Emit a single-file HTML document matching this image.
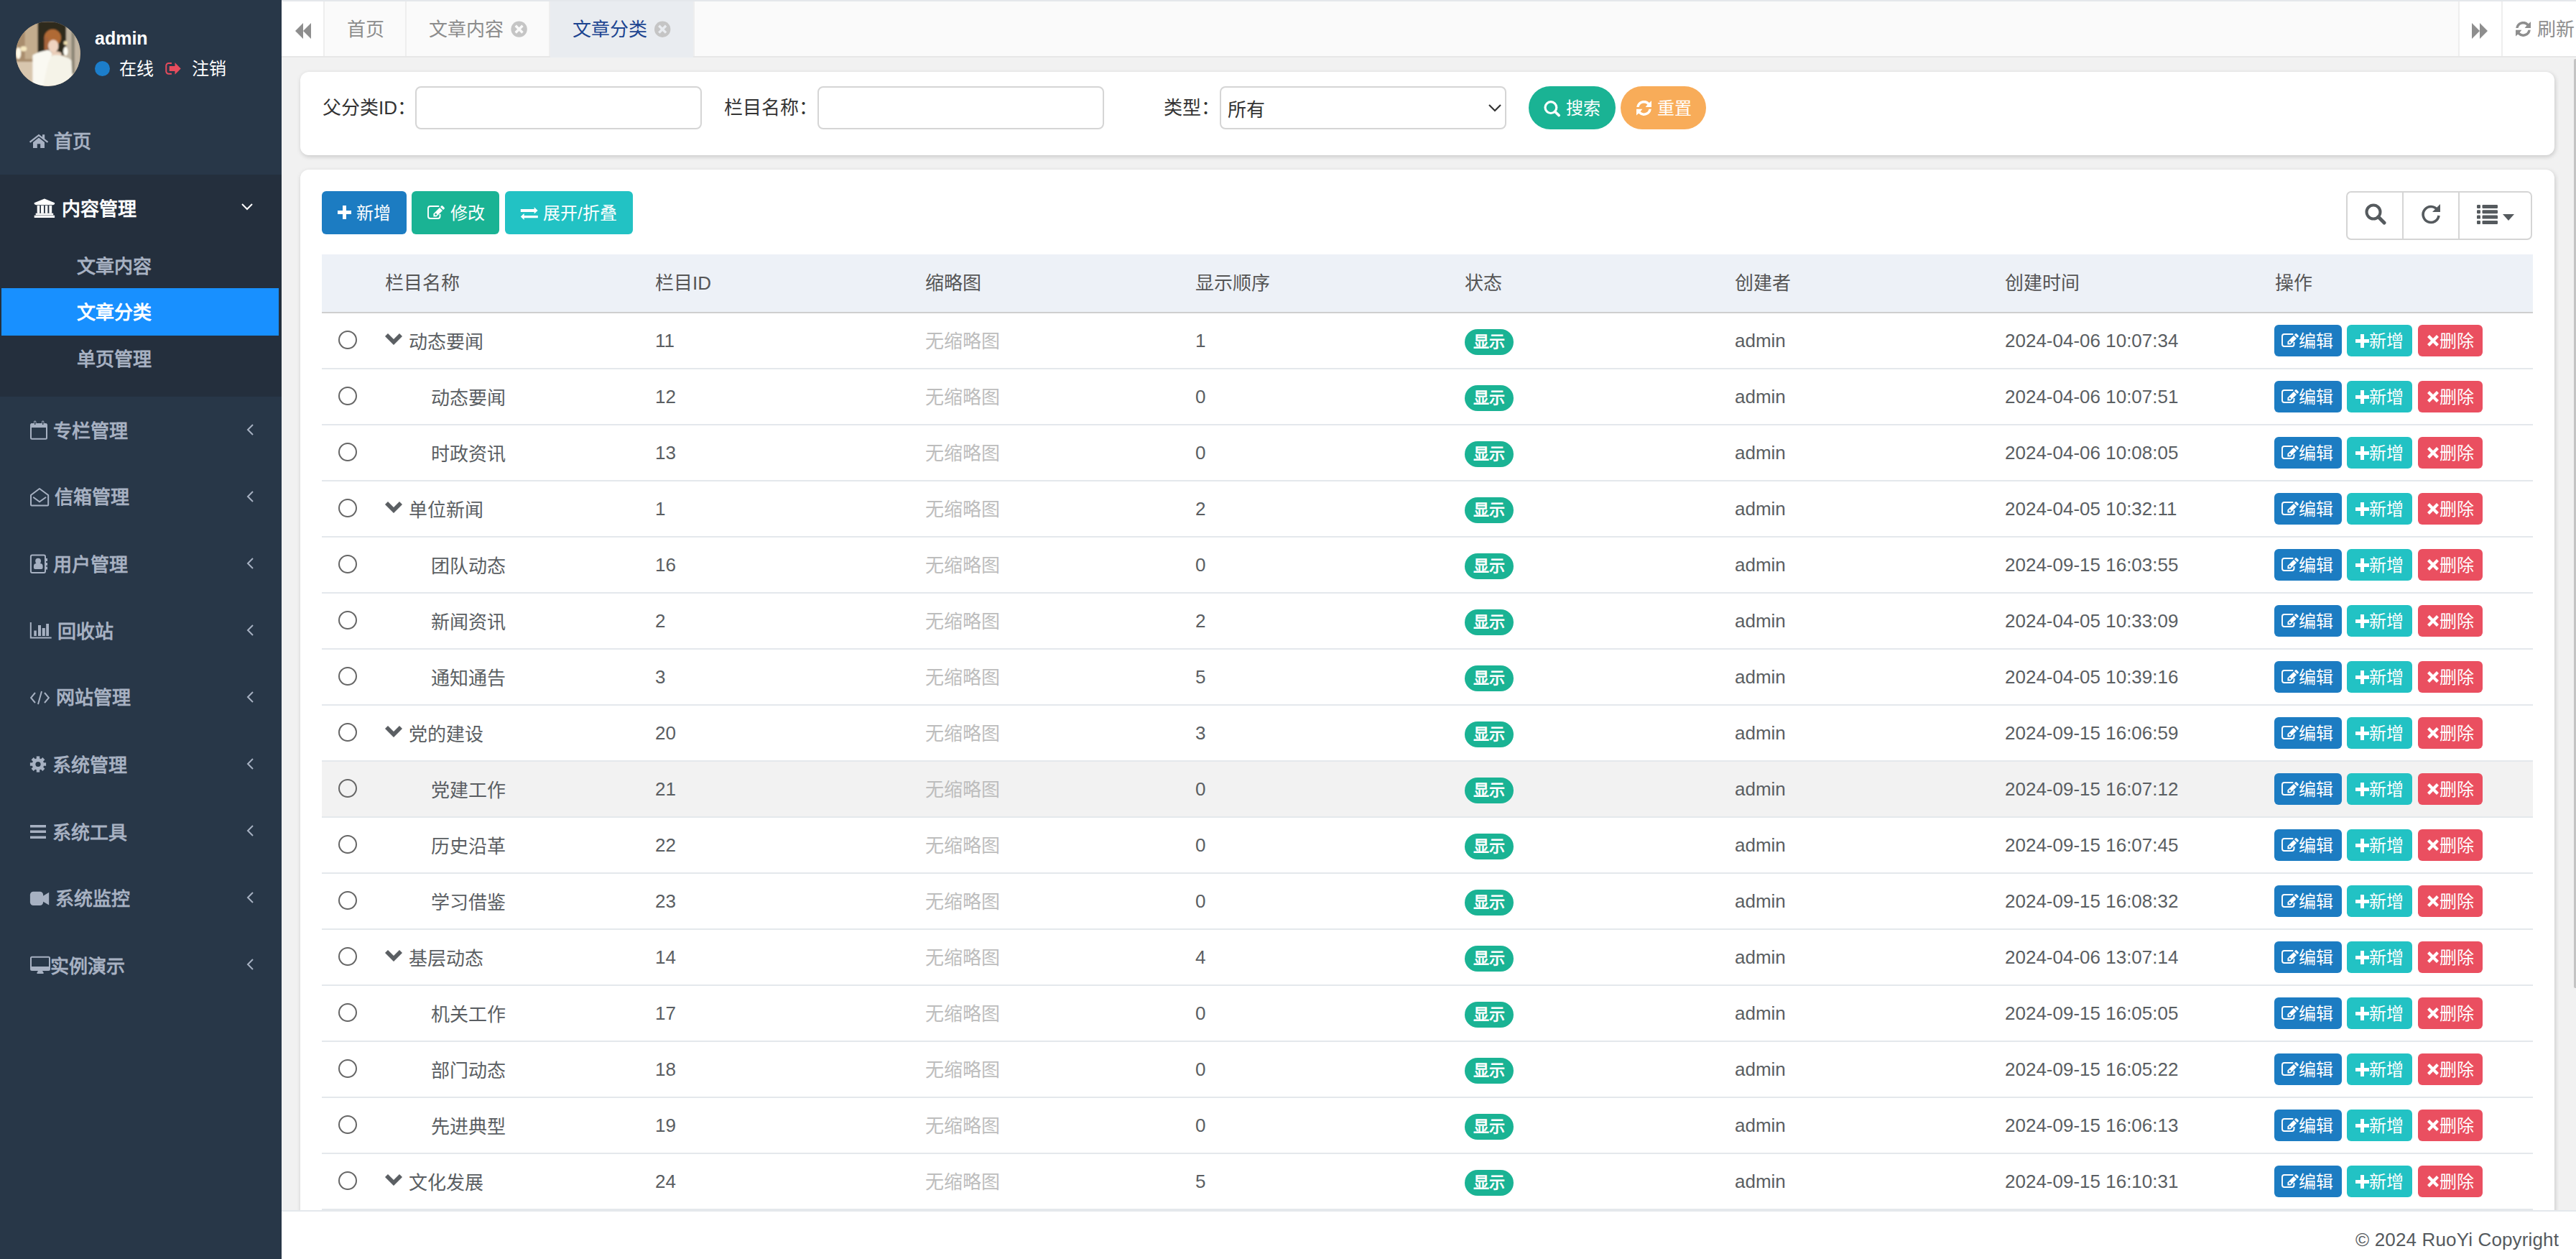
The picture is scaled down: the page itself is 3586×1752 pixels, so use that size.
<!DOCTYPE html>
<html lang="zh-CN">
<head>
<meta charset="utf-8">
<title>文章分类</title>
<style>
*{box-sizing:border-box;margin:0;padding:0}
html,body{width:3586px;height:1752px;overflow:hidden}
body{position:relative;background:#f1f1f1;font-family:"Liberation Sans",sans-serif;font-size:26px;color:#676a6c}
.abs{position:absolute}
svg{position:absolute;display:block}
/* sidebar */
#side{left:0;top:0;width:392px;height:1752px;background:#283748}
#sub{left:0;top:243px;width:392px;height:309px;background:#242f3d}
.mt{position:absolute;height:40px;line-height:40px;color:#a7b1c2;font-weight:bold;font-size:26px;white-space:nowrap}
/* tabs */
#tabs{left:392px;top:0;width:3194px;height:80px;background:#fafafa;border-top:2px solid #e4e7eb;border-bottom:2px solid #e7e7e7}
.tab{position:absolute;height:40px;line-height:40px;color:#8c8c8c;font-size:26px;white-space:nowrap}
/* panels */
.panel{position:absolute;background:#fff;border-radius:12px;box-shadow:1px 2px 6px rgba(0,0,0,.18)}
.lbl{position:absolute;height:40px;line-height:40px;color:#333;font-size:26px;white-space:nowrap}
.inp{position:absolute;border:2px solid #d5d5d5;border-radius:8px;background:#fff}
.btn{position:absolute;color:#fff;font-size:24px;white-space:nowrap}
.btn b{position:absolute;font-weight:500;line-height:40px;height:40px}
/* table */
#thead{left:448px;top:354px;width:3078px;height:82px;background:#edf1f7;border-bottom:2px solid #cfcfcf}
.th{position:absolute;top:20px;height:40px;line-height:40px;color:#555;font-size:26px;white-space:nowrap}
.row{position:absolute;left:448px;width:3078px;height:78px;border-bottom:2px solid #e4e8ec;background:#fff}
.row.hov{background:#f2f2f2}
.td{position:absolute;top:18px;height:40px;line-height:40px;color:#5a5e62;font-size:26px;white-space:nowrap}
.td.grey{color:#bdbdbd}
.td.grey.cj{top:19px}
.td.cj{top:20px}
.radio{position:absolute;left:23px;top:24px;width:26px;height:26px;border:2px solid #666;border-radius:50%}
.tchev{top:28px}
.badge{position:absolute;top:22px;height:36px;width:68px;border-radius:18px;background:#1ab394;color:#fff;font-size:22px;font-weight:bold;line-height:36px;text-align:center;white-space:nowrap}
.ob{position:absolute;top:16px;height:44px;border-radius:6px;color:#fff;font-size:24px;white-space:nowrap}
.ob b{position:absolute;right:12px;top:3px;line-height:40px;font-weight:500}
#footer{left:392px;top:1684px;width:3194px;height:68px;background:#fff;border-top:2px solid #e4e8ec}
@media (max-width:1800px){html{zoom:0.5}}

</style>
</head>
<body>
<!-- SIDEBAR -->
<div id="side" class="abs"></div>
<div id="sub" class="abs"></div>
<svg style="left:22px;top:30px" width="90" height="90" viewBox="0 0 100 100"><defs><clipPath id="avc"><circle cx="50" cy="50" r="50"/></clipPath><filter id="avb" x="-10%" y="-10%" width="120%" height="120%"><feGaussianBlur stdDeviation="1.3"/></filter></defs><g clip-path="url(#avc)"><rect width="100" height="100" fill="#b39a7c"/><g filter="url(#avb)"><rect x="0" y="62" width="100" height="40" fill="#d8c6ae"/><rect x="0" y="0" width="34" height="62" fill="#a98d6d"/><rect x="14" y="0" width="20" height="58" fill="#c4ad8e"/><rect x="34" y="0" width="44" height="52" fill="#2e291e"/><rect x="78" y="0" width="22" height="82" fill="#c1b5a2"/><rect x="86" y="14" width="5" height="66" fill="#8d8676"/><ellipse cx="4" cy="49" rx="4" ry="9" fill="#fffbea"/><ellipse cx="12" cy="42" rx="5" ry="4" fill="#f6e8c0"/><ellipse cx="77" cy="46" rx="3.5" ry="7" fill="#fffef5"/><ellipse cx="77" cy="33" rx="3" ry="3" fill="#f0e0b0"/><ellipse cx="57" cy="25" rx="13" ry="13" fill="#b06a36"/><rect x="44" y="24" width="6" height="20" fill="#a7653a"/><ellipse cx="58" cy="38" rx="8" ry="10" fill="#efd3c0"/><ellipse cx="62" cy="50" rx="9" ry="4" fill="#e9cdb8"/><path d="M58 52 Q74 50 86 60 L88 100 L40 100 L44 60 Z" fill="#f5f3e8"/><path d="M26 52 Q36 46 50 44 Q56 46 56 52 L50 64 L42 100 L26 100 Z" fill="#faf9f2"/></g></g></svg>
<div class="abs" style="left:132px;top:33px;height:40px;line-height:40px;color:#fff;font-weight:bold;font-size:25px">admin</div>
<div class="abs" style="left:132px;top:85px;width:21px;height:21px;border-radius:50%;background:#1c7ecb"></div>
<div class="abs" style="left:166px;top:76px;height:40px;line-height:40px;color:#fff;font-size:24px">在线</div>
<svg style="left:228px;top:84px" width="26" height="22" viewBox="228 84 26 22"><path d="M239 88 H234.8 a3.5 3.5 0 0 0 -3.5 3.5 V99.3 a3.5 3.5 0 0 0 3.5 3.5 H239" fill="none" stroke="#e84c5d" stroke-width="2"/><path d="M235.7 92 H243.5 V86.9 L251.7 95.4 L243.5 103.8 V99 H235.7 Z" fill="#e84c5d"/></svg>
<div class="abs" style="left:267px;top:76px;height:40px;line-height:40px;color:#fff;font-size:24px">注销</div>

<!-- menu -->
<svg style="left:40px;top:185px" width="28" height="23" viewBox="40 185 28 23"><path d="M42.5 197.2 L54 188.2 L65.6 197.2" fill="none" stroke="#a7b1c2" stroke-width="2.3" stroke-linecap="square"/><path d="M59 187.3 H62.2 V194.2 L59 191.6 Z" fill="#a7b1c2"/><path d="M46 198 L54 191.6 L62 198 V206 H56.2 V200.2 H51.8 V206 H46 Z" fill="#a7b1c2"/></svg>
<div class="mt" style="left:75px;top:177px">首页</div>

<svg style="left:46px;top:275px" width="32" height="30" viewBox="46 275 32 30"><path d="M61.9 276.5 L76.1 282.2 V284 L74 285.3 H50 L47.7 284 V282.2 Z" fill="#fff"/><path d="M51.7 286 H55.3 V296.8 H51.7 Z M57 286 H61 V296.8 H57 Z M62.8 286 H66.4 V296.8 H62.8 Z M68.4 286 H72.2 V296.8 H68.4 Z" fill="#fff"/><path d="M49.7 296.8 H74.2 V299.2 H49.7 Z M47.7 299.8 H76.1 V303 H47.7 Z" fill="#fff"/></svg>
<div class="mt" style="left:86px;top:271px;color:#fff">内容管理</div>
<svg style="left:336px;top:283px" width="16" height="10" viewBox="0 0 16 10"><path d="M1 1 L8 8 L15 1" fill="none" stroke="#fff" stroke-width="2"/></svg>

<div class="mt" style="left:107px;top:351px">文章内容</div>
<div class="abs" style="left:2px;top:401px;width:386px;height:66px;background:#1890ff"></div>
<div class="mt" style="left:107px;top:415px;color:#fff">文章分类</div>
<div class="mt" style="left:107px;top:480px">单页管理</div>

<svg style="left:40px;top:584px" width="30" height="30" viewBox="40 584 30 30"><rect x="43" y="590" width="22" height="20.7" rx="1.5" fill="none" stroke="#a7b1c2" stroke-width="2"/><rect x="43" y="589.5" width="22" height="5.5" fill="#a7b1c2"/><rect x="47" y="585.5" width="3.4" height="6.5" rx="1.5" fill="#a7b1c2"/><rect x="58" y="585.5" width="3.4" height="6.5" rx="1.5" fill="#a7b1c2"/><rect x="47.9" y="586.5" width="1.6" height="4.5" rx=".8" fill="#283748"/><rect x="58.9" y="586.5" width="1.6" height="4.5" rx=".8" fill="#283748"/></svg>
<div class="mt" style="left:74px;top:580px">专栏管理</div>

<svg style="left:40px;top:677px" width="30" height="30" viewBox="40 677 30 30"><path d="M43 689 L55 680 L67.2 689 V702.4 a1 1 0 0 1 -1 1 H44 a1 1 0 0 1 -1 -1 Z" fill="none" stroke="#a7b1c2" stroke-width="2" stroke-linejoin="round"/><path d="M46.8 692.3 L55 698.3 L63.5 692.3" fill="none" stroke="#a7b1c2" stroke-width="2" stroke-linecap="round"/></svg>
<div class="mt" style="left:76px;top:672px">信箱管理</div>

<svg style="left:40px;top:770px" width="28" height="30" viewBox="40 770 28 30"><rect x="42.9" y="772.6" width="20.1" height="24.3" rx="2" fill="none" stroke="#a7b1c2" stroke-width="2"/><circle cx="53.1" cy="780.7" r="3.9" fill="#a7b1c2"/><path d="M46.9 788 a4 4 0 0 1 4 -4 H55.6 a4 4 0 0 1 4 4 V790 a2 2 0 0 1 -2 2 H48.9 a2 2 0 0 1 -2 -2 Z" fill="#a7b1c2"/><path d="M63.5 777 H66 V781 H63.5 Z M63.5 783 H66 V787 H63.5 Z M63.5 788.5 H66 V792.5 H63.5 Z" fill="#a7b1c2"/></svg>
<div class="mt" style="left:74px;top:766px">用户管理</div>

<svg style="left:40px;top:864px" width="34" height="27" viewBox="40 864 34 27"><path d="M42.8 866 V887.5 H71.7" fill="none" stroke="#a7b1c2" stroke-width="2"/><path d="M47.3 877.5 H50.8 V885 H47.3 Z M53 870 H57 V885 H53 Z M58.7 874 H62.8 V885 H58.7 Z M64.2 868 H68 V885 H64.2 Z" fill="#a7b1c2"/></svg>
<div class="mt" style="left:80px;top:859px">回收站</div>

<svg style="left:42px;top:961px" width="27" height="20" viewBox="0 0 27 20"><path d="M7 3 L1 10 L7 17 M20 3 L26 10 L20 17 M16 1 L11 19" fill="none" stroke="#a7b1c2" stroke-width="2"/></svg>
<div class="mt" style="left:78px;top:951px">网站管理</div>

<svg style="left:40px;top:1050px" width="28" height="28" viewBox="-13 -13.5 28 28"><circle r="8.3" fill="#a7b1c2"/><rect x="-2.2" y="-11.1" width="4.4" height="6" transform="rotate(0)" fill="#a7b1c2"/><rect x="-2.2" y="-11.1" width="4.4" height="6" transform="rotate(45)" fill="#a7b1c2"/><rect x="-2.2" y="-11.1" width="4.4" height="6" transform="rotate(90)" fill="#a7b1c2"/><rect x="-2.2" y="-11.1" width="4.4" height="6" transform="rotate(135)" fill="#a7b1c2"/><rect x="-2.2" y="-11.1" width="4.4" height="6" transform="rotate(180)" fill="#a7b1c2"/><rect x="-2.2" y="-11.1" width="4.4" height="6" transform="rotate(225)" fill="#a7b1c2"/><rect x="-2.2" y="-11.1" width="4.4" height="6" transform="rotate(270)" fill="#a7b1c2"/><rect x="-2.2" y="-11.1" width="4.4" height="6" transform="rotate(315)" fill="#a7b1c2"/><circle r="3.6" fill="#283748"/></svg>
<div class="mt" style="left:73px;top:1045px">系统管理</div>

<svg style="left:42px;top:1148px" width="22" height="19" viewBox="0 0 22 19"><path d="M0 0 H22 V3.5 H0 Z M0 7.5 H22 V11 H0 Z M0 15.5 H22 V19 H0 Z" fill="#a7b1c2"/></svg>
<div class="mt" style="left:73px;top:1139px">系统工具</div>

<svg style="left:40px;top:1238px" width="30" height="24" viewBox="40 1238 30 24"><rect x="41.9" y="1240.7" width="18.2" height="19.3" rx="4.5" fill="#a7b1c2"/><path d="M58 1248 L68.2 1241.8 V1259.5 L58 1253.5 Z" fill="#a7b1c2"/></svg>
<div class="mt" style="left:77px;top:1231px">系统监控</div>

<svg style="left:40px;top:1328px" width="32" height="30" viewBox="40 1328 32 30"><path d="M44.5 1330.7 H67.5 a2.5 2.5 0 0 1 2.5 2.5 V1348.5 a2.5 2.5 0 0 1 -2.5 2.5 H44.5 a2.5 2.5 0 0 1 -2.5 -2.5 V1333.2 a2.5 2.5 0 0 1 2.5 -2.5 Z M44 1332.7 V1345 H68 V1332.7 Z" fill="#a7b1c2" fill-rule="evenodd"/><path d="M53 1351 H59 L60.6 1353.5 V1355 H51.5 V1353.5 Z" fill="#a7b1c2"/></svg>
<div class="mt" style="left:70px;top:1325px">实例演示</div>

<svg style="left:343px;top:590px" width="10" height="16" viewBox="0 0 10 16"><path d="M9 1 L2 8 L9 15" fill="none" stroke="#a7b1c2" stroke-width="2"/></svg>
<svg style="left:343px;top:683px" width="10" height="16" viewBox="0 0 10 16"><path d="M9 1 L2 8 L9 15" fill="none" stroke="#a7b1c2" stroke-width="2"/></svg>
<svg style="left:343px;top:776px" width="10" height="16" viewBox="0 0 10 16"><path d="M9 1 L2 8 L9 15" fill="none" stroke="#a7b1c2" stroke-width="2"/></svg>
<svg style="left:343px;top:869px" width="10" height="16" viewBox="0 0 10 16"><path d="M9 1 L2 8 L9 15" fill="none" stroke="#a7b1c2" stroke-width="2"/></svg>
<svg style="left:343px;top:962px" width="10" height="16" viewBox="0 0 10 16"><path d="M9 1 L2 8 L9 15" fill="none" stroke="#a7b1c2" stroke-width="2"/></svg>
<svg style="left:343px;top:1055px" width="10" height="16" viewBox="0 0 10 16"><path d="M9 1 L2 8 L9 15" fill="none" stroke="#a7b1c2" stroke-width="2"/></svg>
<svg style="left:343px;top:1148px" width="10" height="16" viewBox="0 0 10 16"><path d="M9 1 L2 8 L9 15" fill="none" stroke="#a7b1c2" stroke-width="2"/></svg>
<svg style="left:343px;top:1241px" width="10" height="16" viewBox="0 0 10 16"><path d="M9 1 L2 8 L9 15" fill="none" stroke="#a7b1c2" stroke-width="2"/></svg>
<svg style="left:343px;top:1334px" width="10" height="16" viewBox="0 0 10 16"><path d="M9 1 L2 8 L9 15" fill="none" stroke="#a7b1c2" stroke-width="2"/></svg>

<!-- TABS -->
<div id="tabs" class="abs"></div>
<div class="abs" style="left:392px;top:2px;width:58px;height:76px;background:#fff"></div>
<div class="abs" style="left:450px;top:2px;width:2px;height:76px;background:#eee"></div>
<svg style="left:411px;top:32px" width="22" height="22" viewBox="0 0 22 22"><path d="M11 0 V22 L0 11 Z M22 0 V22 L11 11 Z" fill="#8e8e8e"/></svg>
<div class="tab" style="left:483px;top:21px">首页</div>
<div class="abs" style="left:564px;top:2px;width:2px;height:76px;background:#eee"></div>
<div class="tab" style="left:597px;top:21px">文章内容</div>
<svg style="left:705px;top:25px" width="35" height="32" viewBox="705 25 35 32"><circle cx="722.6" cy="40.6" r="11.2" fill="#c5c5c5"/><path d="M717.7 35.7 L727.5 45.5 M727.5 35.7 L717.7 45.5" stroke="#fafafa" stroke-width="3.4"/></svg>
<div class="abs" style="left:764px;top:2px;width:2px;height:76px;background:#eee"></div>
<div class="abs" style="left:766px;top:2px;width:199px;height:78px;background:#e9ecf0"></div>
<div class="tab" style="left:797px;top:21px;color:#1d4590">文章分类</div>
<svg style="left:905px;top:25px" width="35" height="32" viewBox="905 25 35 32"><circle cx="922.2" cy="40.7" r="11.2" fill="#c5c5c5"/><path d="M917.3 35.8 L927.1 45.6 M927.1 35.8 L917.3 45.6" stroke="#e9ecf0" stroke-width="3.4"/></svg>
<div class="abs" style="left:965px;top:2px;width:2px;height:76px;background:#eee"></div>
<div class="abs" style="left:3422px;top:2px;width:2px;height:76px;background:#eee"></div>
<div class="abs" style="left:3424px;top:2px;width:58px;height:76px;background:#fff"></div>
<svg style="left:3441px;top:32px" width="22" height="22" viewBox="0 0 22 22"><path d="M0 0 V22 L11 11 Z M11 0 V22 L22 11 Z" fill="#8e8e8e"/></svg>
<div class="abs" style="left:3482px;top:2px;width:2px;height:76px;background:#eee"></div>
<div class="abs" style="left:3484px;top:2px;width:102px;height:76px;background:#fff"></div>
<svg style="left:3502px;top:30px" width="21" height="21" viewBox="0 0 21 21"><path d="M0.2 9.1 A10.4 10.4 0 0 1 17.9 3.0 L21 0.3 V9.1 H12.6 L15.4 5.5 A7 7 0 0 0 3.6 9.1 Z" fill="#8e8e8e"/><path d="M0.2 9.1 A10.4 10.4 0 0 1 17.9 3.0 L21 0.3 V9.1 H12.6 L15.4 5.5 A7 7 0 0 0 3.6 9.1 Z" fill="#8e8e8e" transform="rotate(180 10.5 10.4)"/></svg>
<div class="tab" style="left:3532px;top:21px;color:#8e8e8e">刷新</div>

<!-- SEARCH PANEL -->
<div class="panel" style="left:418px;top:100px;width:3138px;height:116px"></div>
<div class="lbl" style="left:449px;top:130px">父分类ID：</div>
<div class="inp" style="left:578px;top:120px;width:399px;height:60px"></div>
<div class="lbl" style="left:1008px;top:130px">栏目名称：</div>
<div class="inp" style="left:1138px;top:120px;width:399px;height:60px"></div>
<div class="lbl" style="left:1620px;top:130px">类型：</div>
<div class="inp" style="left:1698px;top:120px;width:399px;height:60px"></div>
<div class="lbl" style="left:1709px;top:133px">所有</div>
<svg style="left:2072px;top:145px" width="18" height="11" viewBox="0 0 18 11"><path d="M1 1 L9 9 L17 1" fill="none" stroke="#333" stroke-width="2.2"/></svg>
<div class="btn" style="left:2128px;top:120px;width:121px;height:60px;border-radius:30px;background:#1ab394"><svg style="left:21px;top:19px" width="24" height="24" viewBox="0 0 24 24"><circle cx="9.9" cy="10.6" r="7.9" fill="none" stroke="#fff" stroke-width="3.2"/><path d="M15.6 16.3 L21.2 21.6" stroke="#fff" stroke-width="3.6" stroke-linecap="round"/></svg><b style="left:52px;top:11px">搜索</b></div>
<div class="btn" style="left:2256px;top:120px;width:119px;height:60px;border-radius:30px;background:#f8ac59"><svg style="left:22px;top:20px" width="21" height="21" viewBox="0 0 21 21"><path d="M0.2 9.1 A10.4 10.4 0 0 1 17.9 3.0 L21 0.3 V9.1 H12.6 L15.4 5.5 A7 7 0 0 0 3.6 9.1 Z" fill="#fff"/><path d="M0.2 9.1 A10.4 10.4 0 0 1 17.9 3.0 L21 0.3 V9.1 H12.6 L15.4 5.5 A7 7 0 0 0 3.6 9.1 Z" fill="#fff" transform="rotate(180 10.5 10.4)"/></svg><b style="left:51px;top:11px">重置</b></div>

<!-- TABLE PANEL -->
<div class="panel" style="left:418px;top:236px;width:3138px;height:1600px"></div>
<div class="btn" style="left:448px;top:266px;width:118px;height:60px;border-radius:6px;background:#1c7cc2"><svg style="left:22px;top:20px" width="19" height="19" viewBox="0 0 19 19"><path d="M7 0 H12 V7 H19 V12 H12 V19 H7 V12 H0 V7 H7 Z" fill="#fff"/></svg><b style="left:48px;top:11px">新增</b></div>
<div class="btn" style="left:573px;top:266px;width:122px;height:60px;border-radius:6px;background:#1ab394"><svg style="left:22px;top:20px" width="25" height="21" viewBox="595 286 25 21"><path d="M611.3 287 H599 a3 3 0 0 0 -3 3 V301 a3 3 0 0 0 3 3 H609.5 a3 3 0 0 0 3 -3 V298" fill="none" stroke="#fff" stroke-width="1.9"/><g transform="translate(603.4 301.6) rotate(-45)"><path d="M0 0 L3 -2.9 H15 V2.9 H3 Z" fill="#fff"/><rect x="3.4" y="-1.3" width="2.6" height="2.6" fill="#1ab394"/><path d="M16.4 -2.9 H18.4 a1.3 1.3 0 0 1 1.3 1.3 V1.6 a1.3 1.3 0 0 1 -1.3 1.3 H16.4 Z" fill="#fff"/></g></svg><b style="left:54px;top:11px">修改</b></div>
<div class="btn" style="left:703px;top:266px;width:178px;height:60px;border-radius:6px;background:#22c2c4"><svg style="left:21px;top:22px" width="26" height="19" viewBox="724 288 26 19"><path d="M724.8 291.1 H743.7 V288.3 L748.6 293 L743.7 297.5 V294.9 H724.8 Z" fill="#fff"/><path d="M748.8 299.9 H729.6 V296.9 L724.8 301.6 L729.6 306.1 V303.3 H748.8 Z" fill="#fff"/></svg><b style="left:53px;top:11px">展开/折叠</b></div>

<div class="abs" style="left:3266px;top:266px;width:259px;height:68px;border:2px solid #d5d5d5;border-radius:7px;background:#fff"></div>
<div class="abs" style="left:3344px;top:268px;width:2px;height:64px;background:#d5d5d5"></div>
<div class="abs" style="left:3422px;top:268px;width:2px;height:64px;background:#d5d5d5"></div>
<svg style="left:3292px;top:283px" width="30" height="30" viewBox="0 0 30 30"><circle cx="12" cy="12" r="9.5" fill="none" stroke="#555a5e" stroke-width="4"/><path d="M19 19 L27 27" stroke="#555a5e" stroke-width="5" stroke-linecap="round"/></svg>
<svg style="left:3370px;top:283px" width="29" height="30" viewBox="0 0 29 30"><path d="M23 9 A11 11 0 1 0 25 17" fill="none" stroke="#555a5e" stroke-width="3.6"/><path d="M27 1 V12 H16 Z" fill="#555a5e"/></svg>
<svg style="left:3448px;top:285px" width="29" height="27" viewBox="0 0 29 27"><rect x="0" y="0" width="5" height="5" rx="1.2" fill="#555a5e"/><rect x="0" y="7.3" width="5" height="5" rx="1.2" fill="#555a5e"/><rect x="0" y="14.6" width="5" height="5" rx="1.2" fill="#555a5e"/><rect x="0" y="21.9" width="5" height="5" rx="1.2" fill="#555a5e"/><rect x="7.5" y="0" width="21.5" height="5" rx="1.2" fill="#555a5e"/><rect x="7.5" y="7.3" width="21.5" height="5" rx="1.2" fill="#555a5e"/><rect x="7.5" y="14.6" width="21.5" height="5" rx="1.2" fill="#555a5e"/><rect x="7.5" y="21.9" width="21.5" height="5" rx="1.2" fill="#555a5e"/></svg>
<svg style="left:3484px;top:298px" width="16" height="9" viewBox="0 0 16 9"><path d="M0 0 H16 L8 9 Z" fill="#555a5e"/></svg>

<div id="thead" class="abs">
<span class="th" style="left:88px">栏目名称</span>
<span class="th" style="left:464px">栏目ID</span>
<span class="th" style="left:840px">缩略图</span>
<span class="th" style="left:1216px">显示顺序</span>
<span class="th" style="left:1591px">状态</span>
<span class="th" style="left:1967px">创建者</span>
<span class="th" style="left:2343px">创建时间</span>
<span class="th" style="left:2719px">操作</span>
</div>
<div class="row" style="top:436px"><i class="radio"></i><svg class="tchev" style="left:88px" width="24" height="16" viewBox="0 0 24 16"><path d="M0 4 L4 0 L12 8 L20 0 L24 4 L12 16 Z" fill="#5b5f63"/></svg><span class="td cj" style="left:121px">动态要闻</span><span class="td num" style="left:464px">11</span><span class="td grey cj" style="left:840px">无缩略图</span><span class="td num" style="left:1216px">1</span><span class="badge" style="left:1591px">显示</span><span class="td num" style="left:1967px">admin</span><span class="td num" style="left:2343px">2024-04-06 10:07:34</span><span class="ob" style="left:2718px;width:94px;background:#1c7cc2"><svg class="oi" style="left:10px;top:12px" width="25" height="21" viewBox="595 286 25 21"><path d="M611.3 287 H599 a3 3 0 0 0 -3 3 V301 a3 3 0 0 0 3 3 H609.5 a3 3 0 0 0 3 -3 V298" fill="none" stroke="#fff" stroke-width="1.9"/><g transform="translate(603.4 301.6) rotate(-45)"><path d="M0 0 L3 -2.9 H15 V2.9 H3 Z" fill="#fff"/><rect x="3.4" y="-1.3" width="2.6" height="2.6" fill="#1c7cc2"/><path d="M16.4 -2.9 H18.4 a1.3 1.3 0 0 1 1.3 1.3 V1.6 a1.3 1.3 0 0 1 -1.3 1.3 H16.4 Z" fill="#fff"/></g></svg><b>编辑</b></span><span class="ob" style="left:2819px;width:91px;background:#22c2c4"><svg class="oi" style="left:12px;top:13px" width="19" height="19" viewBox="0 0 19 19"><path d="M7 0 H12 V7 H19 V12 H12 V19 H7 V12 H0 V7 H7 Z" fill="#fff"/></svg><b>新增</b></span><span class="ob" style="left:2918px;width:90px;background:#ea4f60"><svg class="oi" style="left:13px;top:14px" width="16" height="16" viewBox="0 0 16 16"><path d="M0 3 L3 0 L8 5 L13 0 L16 3 L11 8 L16 13 L13 16 L8 11 L3 16 L0 13 L5 8 Z" fill="#fff"/></svg><b>删除</b></span></div>
<div class="row" style="top:514px"><i class="radio"></i><span class="td cj" style="left:152px">动态要闻</span><span class="td num" style="left:464px">12</span><span class="td grey cj" style="left:840px">无缩略图</span><span class="td num" style="left:1216px">0</span><span class="badge" style="left:1591px">显示</span><span class="td num" style="left:1967px">admin</span><span class="td num" style="left:2343px">2024-04-06 10:07:51</span><span class="ob" style="left:2718px;width:94px;background:#1c7cc2"><svg class="oi" style="left:10px;top:12px" width="25" height="21" viewBox="595 286 25 21"><path d="M611.3 287 H599 a3 3 0 0 0 -3 3 V301 a3 3 0 0 0 3 3 H609.5 a3 3 0 0 0 3 -3 V298" fill="none" stroke="#fff" stroke-width="1.9"/><g transform="translate(603.4 301.6) rotate(-45)"><path d="M0 0 L3 -2.9 H15 V2.9 H3 Z" fill="#fff"/><rect x="3.4" y="-1.3" width="2.6" height="2.6" fill="#1c7cc2"/><path d="M16.4 -2.9 H18.4 a1.3 1.3 0 0 1 1.3 1.3 V1.6 a1.3 1.3 0 0 1 -1.3 1.3 H16.4 Z" fill="#fff"/></g></svg><b>编辑</b></span><span class="ob" style="left:2819px;width:91px;background:#22c2c4"><svg class="oi" style="left:12px;top:13px" width="19" height="19" viewBox="0 0 19 19"><path d="M7 0 H12 V7 H19 V12 H12 V19 H7 V12 H0 V7 H7 Z" fill="#fff"/></svg><b>新增</b></span><span class="ob" style="left:2918px;width:90px;background:#ea4f60"><svg class="oi" style="left:13px;top:14px" width="16" height="16" viewBox="0 0 16 16"><path d="M0 3 L3 0 L8 5 L13 0 L16 3 L11 8 L16 13 L13 16 L8 11 L3 16 L0 13 L5 8 Z" fill="#fff"/></svg><b>删除</b></span></div>
<div class="row" style="top:592px"><i class="radio"></i><span class="td cj" style="left:152px">时政资讯</span><span class="td num" style="left:464px">13</span><span class="td grey cj" style="left:840px">无缩略图</span><span class="td num" style="left:1216px">0</span><span class="badge" style="left:1591px">显示</span><span class="td num" style="left:1967px">admin</span><span class="td num" style="left:2343px">2024-04-06 10:08:05</span><span class="ob" style="left:2718px;width:94px;background:#1c7cc2"><svg class="oi" style="left:10px;top:12px" width="25" height="21" viewBox="595 286 25 21"><path d="M611.3 287 H599 a3 3 0 0 0 -3 3 V301 a3 3 0 0 0 3 3 H609.5 a3 3 0 0 0 3 -3 V298" fill="none" stroke="#fff" stroke-width="1.9"/><g transform="translate(603.4 301.6) rotate(-45)"><path d="M0 0 L3 -2.9 H15 V2.9 H3 Z" fill="#fff"/><rect x="3.4" y="-1.3" width="2.6" height="2.6" fill="#1c7cc2"/><path d="M16.4 -2.9 H18.4 a1.3 1.3 0 0 1 1.3 1.3 V1.6 a1.3 1.3 0 0 1 -1.3 1.3 H16.4 Z" fill="#fff"/></g></svg><b>编辑</b></span><span class="ob" style="left:2819px;width:91px;background:#22c2c4"><svg class="oi" style="left:12px;top:13px" width="19" height="19" viewBox="0 0 19 19"><path d="M7 0 H12 V7 H19 V12 H12 V19 H7 V12 H0 V7 H7 Z" fill="#fff"/></svg><b>新增</b></span><span class="ob" style="left:2918px;width:90px;background:#ea4f60"><svg class="oi" style="left:13px;top:14px" width="16" height="16" viewBox="0 0 16 16"><path d="M0 3 L3 0 L8 5 L13 0 L16 3 L11 8 L16 13 L13 16 L8 11 L3 16 L0 13 L5 8 Z" fill="#fff"/></svg><b>删除</b></span></div>
<div class="row" style="top:670px"><i class="radio"></i><svg class="tchev" style="left:88px" width="24" height="16" viewBox="0 0 24 16"><path d="M0 4 L4 0 L12 8 L20 0 L24 4 L12 16 Z" fill="#5b5f63"/></svg><span class="td cj" style="left:121px">单位新闻</span><span class="td num" style="left:464px">1</span><span class="td grey cj" style="left:840px">无缩略图</span><span class="td num" style="left:1216px">2</span><span class="badge" style="left:1591px">显示</span><span class="td num" style="left:1967px">admin</span><span class="td num" style="left:2343px">2024-04-05 10:32:11</span><span class="ob" style="left:2718px;width:94px;background:#1c7cc2"><svg class="oi" style="left:10px;top:12px" width="25" height="21" viewBox="595 286 25 21"><path d="M611.3 287 H599 a3 3 0 0 0 -3 3 V301 a3 3 0 0 0 3 3 H609.5 a3 3 0 0 0 3 -3 V298" fill="none" stroke="#fff" stroke-width="1.9"/><g transform="translate(603.4 301.6) rotate(-45)"><path d="M0 0 L3 -2.9 H15 V2.9 H3 Z" fill="#fff"/><rect x="3.4" y="-1.3" width="2.6" height="2.6" fill="#1c7cc2"/><path d="M16.4 -2.9 H18.4 a1.3 1.3 0 0 1 1.3 1.3 V1.6 a1.3 1.3 0 0 1 -1.3 1.3 H16.4 Z" fill="#fff"/></g></svg><b>编辑</b></span><span class="ob" style="left:2819px;width:91px;background:#22c2c4"><svg class="oi" style="left:12px;top:13px" width="19" height="19" viewBox="0 0 19 19"><path d="M7 0 H12 V7 H19 V12 H12 V19 H7 V12 H0 V7 H7 Z" fill="#fff"/></svg><b>新增</b></span><span class="ob" style="left:2918px;width:90px;background:#ea4f60"><svg class="oi" style="left:13px;top:14px" width="16" height="16" viewBox="0 0 16 16"><path d="M0 3 L3 0 L8 5 L13 0 L16 3 L11 8 L16 13 L13 16 L8 11 L3 16 L0 13 L5 8 Z" fill="#fff"/></svg><b>删除</b></span></div>
<div class="row" style="top:748px"><i class="radio"></i><span class="td cj" style="left:152px">团队动态</span><span class="td num" style="left:464px">16</span><span class="td grey cj" style="left:840px">无缩略图</span><span class="td num" style="left:1216px">0</span><span class="badge" style="left:1591px">显示</span><span class="td num" style="left:1967px">admin</span><span class="td num" style="left:2343px">2024-09-15 16:03:55</span><span class="ob" style="left:2718px;width:94px;background:#1c7cc2"><svg class="oi" style="left:10px;top:12px" width="25" height="21" viewBox="595 286 25 21"><path d="M611.3 287 H599 a3 3 0 0 0 -3 3 V301 a3 3 0 0 0 3 3 H609.5 a3 3 0 0 0 3 -3 V298" fill="none" stroke="#fff" stroke-width="1.9"/><g transform="translate(603.4 301.6) rotate(-45)"><path d="M0 0 L3 -2.9 H15 V2.9 H3 Z" fill="#fff"/><rect x="3.4" y="-1.3" width="2.6" height="2.6" fill="#1c7cc2"/><path d="M16.4 -2.9 H18.4 a1.3 1.3 0 0 1 1.3 1.3 V1.6 a1.3 1.3 0 0 1 -1.3 1.3 H16.4 Z" fill="#fff"/></g></svg><b>编辑</b></span><span class="ob" style="left:2819px;width:91px;background:#22c2c4"><svg class="oi" style="left:12px;top:13px" width="19" height="19" viewBox="0 0 19 19"><path d="M7 0 H12 V7 H19 V12 H12 V19 H7 V12 H0 V7 H7 Z" fill="#fff"/></svg><b>新增</b></span><span class="ob" style="left:2918px;width:90px;background:#ea4f60"><svg class="oi" style="left:13px;top:14px" width="16" height="16" viewBox="0 0 16 16"><path d="M0 3 L3 0 L8 5 L13 0 L16 3 L11 8 L16 13 L13 16 L8 11 L3 16 L0 13 L5 8 Z" fill="#fff"/></svg><b>删除</b></span></div>
<div class="row" style="top:826px"><i class="radio"></i><span class="td cj" style="left:152px">新闻资讯</span><span class="td num" style="left:464px">2</span><span class="td grey cj" style="left:840px">无缩略图</span><span class="td num" style="left:1216px">2</span><span class="badge" style="left:1591px">显示</span><span class="td num" style="left:1967px">admin</span><span class="td num" style="left:2343px">2024-04-05 10:33:09</span><span class="ob" style="left:2718px;width:94px;background:#1c7cc2"><svg class="oi" style="left:10px;top:12px" width="25" height="21" viewBox="595 286 25 21"><path d="M611.3 287 H599 a3 3 0 0 0 -3 3 V301 a3 3 0 0 0 3 3 H609.5 a3 3 0 0 0 3 -3 V298" fill="none" stroke="#fff" stroke-width="1.9"/><g transform="translate(603.4 301.6) rotate(-45)"><path d="M0 0 L3 -2.9 H15 V2.9 H3 Z" fill="#fff"/><rect x="3.4" y="-1.3" width="2.6" height="2.6" fill="#1c7cc2"/><path d="M16.4 -2.9 H18.4 a1.3 1.3 0 0 1 1.3 1.3 V1.6 a1.3 1.3 0 0 1 -1.3 1.3 H16.4 Z" fill="#fff"/></g></svg><b>编辑</b></span><span class="ob" style="left:2819px;width:91px;background:#22c2c4"><svg class="oi" style="left:12px;top:13px" width="19" height="19" viewBox="0 0 19 19"><path d="M7 0 H12 V7 H19 V12 H12 V19 H7 V12 H0 V7 H7 Z" fill="#fff"/></svg><b>新增</b></span><span class="ob" style="left:2918px;width:90px;background:#ea4f60"><svg class="oi" style="left:13px;top:14px" width="16" height="16" viewBox="0 0 16 16"><path d="M0 3 L3 0 L8 5 L13 0 L16 3 L11 8 L16 13 L13 16 L8 11 L3 16 L0 13 L5 8 Z" fill="#fff"/></svg><b>删除</b></span></div>
<div class="row" style="top:904px"><i class="radio"></i><span class="td cj" style="left:152px">通知通告</span><span class="td num" style="left:464px">3</span><span class="td grey cj" style="left:840px">无缩略图</span><span class="td num" style="left:1216px">5</span><span class="badge" style="left:1591px">显示</span><span class="td num" style="left:1967px">admin</span><span class="td num" style="left:2343px">2024-04-05 10:39:16</span><span class="ob" style="left:2718px;width:94px;background:#1c7cc2"><svg class="oi" style="left:10px;top:12px" width="25" height="21" viewBox="595 286 25 21"><path d="M611.3 287 H599 a3 3 0 0 0 -3 3 V301 a3 3 0 0 0 3 3 H609.5 a3 3 0 0 0 3 -3 V298" fill="none" stroke="#fff" stroke-width="1.9"/><g transform="translate(603.4 301.6) rotate(-45)"><path d="M0 0 L3 -2.9 H15 V2.9 H3 Z" fill="#fff"/><rect x="3.4" y="-1.3" width="2.6" height="2.6" fill="#1c7cc2"/><path d="M16.4 -2.9 H18.4 a1.3 1.3 0 0 1 1.3 1.3 V1.6 a1.3 1.3 0 0 1 -1.3 1.3 H16.4 Z" fill="#fff"/></g></svg><b>编辑</b></span><span class="ob" style="left:2819px;width:91px;background:#22c2c4"><svg class="oi" style="left:12px;top:13px" width="19" height="19" viewBox="0 0 19 19"><path d="M7 0 H12 V7 H19 V12 H12 V19 H7 V12 H0 V7 H7 Z" fill="#fff"/></svg><b>新增</b></span><span class="ob" style="left:2918px;width:90px;background:#ea4f60"><svg class="oi" style="left:13px;top:14px" width="16" height="16" viewBox="0 0 16 16"><path d="M0 3 L3 0 L8 5 L13 0 L16 3 L11 8 L16 13 L13 16 L8 11 L3 16 L0 13 L5 8 Z" fill="#fff"/></svg><b>删除</b></span></div>
<div class="row" style="top:982px"><i class="radio"></i><svg class="tchev" style="left:88px" width="24" height="16" viewBox="0 0 24 16"><path d="M0 4 L4 0 L12 8 L20 0 L24 4 L12 16 Z" fill="#5b5f63"/></svg><span class="td cj" style="left:121px">党的建设</span><span class="td num" style="left:464px">20</span><span class="td grey cj" style="left:840px">无缩略图</span><span class="td num" style="left:1216px">3</span><span class="badge" style="left:1591px">显示</span><span class="td num" style="left:1967px">admin</span><span class="td num" style="left:2343px">2024-09-15 16:06:59</span><span class="ob" style="left:2718px;width:94px;background:#1c7cc2"><svg class="oi" style="left:10px;top:12px" width="25" height="21" viewBox="595 286 25 21"><path d="M611.3 287 H599 a3 3 0 0 0 -3 3 V301 a3 3 0 0 0 3 3 H609.5 a3 3 0 0 0 3 -3 V298" fill="none" stroke="#fff" stroke-width="1.9"/><g transform="translate(603.4 301.6) rotate(-45)"><path d="M0 0 L3 -2.9 H15 V2.9 H3 Z" fill="#fff"/><rect x="3.4" y="-1.3" width="2.6" height="2.6" fill="#1c7cc2"/><path d="M16.4 -2.9 H18.4 a1.3 1.3 0 0 1 1.3 1.3 V1.6 a1.3 1.3 0 0 1 -1.3 1.3 H16.4 Z" fill="#fff"/></g></svg><b>编辑</b></span><span class="ob" style="left:2819px;width:91px;background:#22c2c4"><svg class="oi" style="left:12px;top:13px" width="19" height="19" viewBox="0 0 19 19"><path d="M7 0 H12 V7 H19 V12 H12 V19 H7 V12 H0 V7 H7 Z" fill="#fff"/></svg><b>新增</b></span><span class="ob" style="left:2918px;width:90px;background:#ea4f60"><svg class="oi" style="left:13px;top:14px" width="16" height="16" viewBox="0 0 16 16"><path d="M0 3 L3 0 L8 5 L13 0 L16 3 L11 8 L16 13 L13 16 L8 11 L3 16 L0 13 L5 8 Z" fill="#fff"/></svg><b>删除</b></span></div>
<div class="row hov" style="top:1060px"><i class="radio"></i><span class="td cj" style="left:152px">党建工作</span><span class="td num" style="left:464px">21</span><span class="td grey cj" style="left:840px">无缩略图</span><span class="td num" style="left:1216px">0</span><span class="badge" style="left:1591px">显示</span><span class="td num" style="left:1967px">admin</span><span class="td num" style="left:2343px">2024-09-15 16:07:12</span><span class="ob" style="left:2718px;width:94px;background:#1c7cc2"><svg class="oi" style="left:10px;top:12px" width="25" height="21" viewBox="595 286 25 21"><path d="M611.3 287 H599 a3 3 0 0 0 -3 3 V301 a3 3 0 0 0 3 3 H609.5 a3 3 0 0 0 3 -3 V298" fill="none" stroke="#fff" stroke-width="1.9"/><g transform="translate(603.4 301.6) rotate(-45)"><path d="M0 0 L3 -2.9 H15 V2.9 H3 Z" fill="#fff"/><rect x="3.4" y="-1.3" width="2.6" height="2.6" fill="#1c7cc2"/><path d="M16.4 -2.9 H18.4 a1.3 1.3 0 0 1 1.3 1.3 V1.6 a1.3 1.3 0 0 1 -1.3 1.3 H16.4 Z" fill="#fff"/></g></svg><b>编辑</b></span><span class="ob" style="left:2819px;width:91px;background:#22c2c4"><svg class="oi" style="left:12px;top:13px" width="19" height="19" viewBox="0 0 19 19"><path d="M7 0 H12 V7 H19 V12 H12 V19 H7 V12 H0 V7 H7 Z" fill="#fff"/></svg><b>新增</b></span><span class="ob" style="left:2918px;width:90px;background:#ea4f60"><svg class="oi" style="left:13px;top:14px" width="16" height="16" viewBox="0 0 16 16"><path d="M0 3 L3 0 L8 5 L13 0 L16 3 L11 8 L16 13 L13 16 L8 11 L3 16 L0 13 L5 8 Z" fill="#fff"/></svg><b>删除</b></span></div>
<div class="row" style="top:1138px"><i class="radio"></i><span class="td cj" style="left:152px">历史沿革</span><span class="td num" style="left:464px">22</span><span class="td grey cj" style="left:840px">无缩略图</span><span class="td num" style="left:1216px">0</span><span class="badge" style="left:1591px">显示</span><span class="td num" style="left:1967px">admin</span><span class="td num" style="left:2343px">2024-09-15 16:07:45</span><span class="ob" style="left:2718px;width:94px;background:#1c7cc2"><svg class="oi" style="left:10px;top:12px" width="25" height="21" viewBox="595 286 25 21"><path d="M611.3 287 H599 a3 3 0 0 0 -3 3 V301 a3 3 0 0 0 3 3 H609.5 a3 3 0 0 0 3 -3 V298" fill="none" stroke="#fff" stroke-width="1.9"/><g transform="translate(603.4 301.6) rotate(-45)"><path d="M0 0 L3 -2.9 H15 V2.9 H3 Z" fill="#fff"/><rect x="3.4" y="-1.3" width="2.6" height="2.6" fill="#1c7cc2"/><path d="M16.4 -2.9 H18.4 a1.3 1.3 0 0 1 1.3 1.3 V1.6 a1.3 1.3 0 0 1 -1.3 1.3 H16.4 Z" fill="#fff"/></g></svg><b>编辑</b></span><span class="ob" style="left:2819px;width:91px;background:#22c2c4"><svg class="oi" style="left:12px;top:13px" width="19" height="19" viewBox="0 0 19 19"><path d="M7 0 H12 V7 H19 V12 H12 V19 H7 V12 H0 V7 H7 Z" fill="#fff"/></svg><b>新增</b></span><span class="ob" style="left:2918px;width:90px;background:#ea4f60"><svg class="oi" style="left:13px;top:14px" width="16" height="16" viewBox="0 0 16 16"><path d="M0 3 L3 0 L8 5 L13 0 L16 3 L11 8 L16 13 L13 16 L8 11 L3 16 L0 13 L5 8 Z" fill="#fff"/></svg><b>删除</b></span></div>
<div class="row" style="top:1216px"><i class="radio"></i><span class="td cj" style="left:152px">学习借鉴</span><span class="td num" style="left:464px">23</span><span class="td grey cj" style="left:840px">无缩略图</span><span class="td num" style="left:1216px">0</span><span class="badge" style="left:1591px">显示</span><span class="td num" style="left:1967px">admin</span><span class="td num" style="left:2343px">2024-09-15 16:08:32</span><span class="ob" style="left:2718px;width:94px;background:#1c7cc2"><svg class="oi" style="left:10px;top:12px" width="25" height="21" viewBox="595 286 25 21"><path d="M611.3 287 H599 a3 3 0 0 0 -3 3 V301 a3 3 0 0 0 3 3 H609.5 a3 3 0 0 0 3 -3 V298" fill="none" stroke="#fff" stroke-width="1.9"/><g transform="translate(603.4 301.6) rotate(-45)"><path d="M0 0 L3 -2.9 H15 V2.9 H3 Z" fill="#fff"/><rect x="3.4" y="-1.3" width="2.6" height="2.6" fill="#1c7cc2"/><path d="M16.4 -2.9 H18.4 a1.3 1.3 0 0 1 1.3 1.3 V1.6 a1.3 1.3 0 0 1 -1.3 1.3 H16.4 Z" fill="#fff"/></g></svg><b>编辑</b></span><span class="ob" style="left:2819px;width:91px;background:#22c2c4"><svg class="oi" style="left:12px;top:13px" width="19" height="19" viewBox="0 0 19 19"><path d="M7 0 H12 V7 H19 V12 H12 V19 H7 V12 H0 V7 H7 Z" fill="#fff"/></svg><b>新增</b></span><span class="ob" style="left:2918px;width:90px;background:#ea4f60"><svg class="oi" style="left:13px;top:14px" width="16" height="16" viewBox="0 0 16 16"><path d="M0 3 L3 0 L8 5 L13 0 L16 3 L11 8 L16 13 L13 16 L8 11 L3 16 L0 13 L5 8 Z" fill="#fff"/></svg><b>删除</b></span></div>
<div class="row" style="top:1294px"><i class="radio"></i><svg class="tchev" style="left:88px" width="24" height="16" viewBox="0 0 24 16"><path d="M0 4 L4 0 L12 8 L20 0 L24 4 L12 16 Z" fill="#5b5f63"/></svg><span class="td cj" style="left:121px">基层动态</span><span class="td num" style="left:464px">14</span><span class="td grey cj" style="left:840px">无缩略图</span><span class="td num" style="left:1216px">4</span><span class="badge" style="left:1591px">显示</span><span class="td num" style="left:1967px">admin</span><span class="td num" style="left:2343px">2024-04-06 13:07:14</span><span class="ob" style="left:2718px;width:94px;background:#1c7cc2"><svg class="oi" style="left:10px;top:12px" width="25" height="21" viewBox="595 286 25 21"><path d="M611.3 287 H599 a3 3 0 0 0 -3 3 V301 a3 3 0 0 0 3 3 H609.5 a3 3 0 0 0 3 -3 V298" fill="none" stroke="#fff" stroke-width="1.9"/><g transform="translate(603.4 301.6) rotate(-45)"><path d="M0 0 L3 -2.9 H15 V2.9 H3 Z" fill="#fff"/><rect x="3.4" y="-1.3" width="2.6" height="2.6" fill="#1c7cc2"/><path d="M16.4 -2.9 H18.4 a1.3 1.3 0 0 1 1.3 1.3 V1.6 a1.3 1.3 0 0 1 -1.3 1.3 H16.4 Z" fill="#fff"/></g></svg><b>编辑</b></span><span class="ob" style="left:2819px;width:91px;background:#22c2c4"><svg class="oi" style="left:12px;top:13px" width="19" height="19" viewBox="0 0 19 19"><path d="M7 0 H12 V7 H19 V12 H12 V19 H7 V12 H0 V7 H7 Z" fill="#fff"/></svg><b>新增</b></span><span class="ob" style="left:2918px;width:90px;background:#ea4f60"><svg class="oi" style="left:13px;top:14px" width="16" height="16" viewBox="0 0 16 16"><path d="M0 3 L3 0 L8 5 L13 0 L16 3 L11 8 L16 13 L13 16 L8 11 L3 16 L0 13 L5 8 Z" fill="#fff"/></svg><b>删除</b></span></div>
<div class="row" style="top:1372px"><i class="radio"></i><span class="td cj" style="left:152px">机关工作</span><span class="td num" style="left:464px">17</span><span class="td grey cj" style="left:840px">无缩略图</span><span class="td num" style="left:1216px">0</span><span class="badge" style="left:1591px">显示</span><span class="td num" style="left:1967px">admin</span><span class="td num" style="left:2343px">2024-09-15 16:05:05</span><span class="ob" style="left:2718px;width:94px;background:#1c7cc2"><svg class="oi" style="left:10px;top:12px" width="25" height="21" viewBox="595 286 25 21"><path d="M611.3 287 H599 a3 3 0 0 0 -3 3 V301 a3 3 0 0 0 3 3 H609.5 a3 3 0 0 0 3 -3 V298" fill="none" stroke="#fff" stroke-width="1.9"/><g transform="translate(603.4 301.6) rotate(-45)"><path d="M0 0 L3 -2.9 H15 V2.9 H3 Z" fill="#fff"/><rect x="3.4" y="-1.3" width="2.6" height="2.6" fill="#1c7cc2"/><path d="M16.4 -2.9 H18.4 a1.3 1.3 0 0 1 1.3 1.3 V1.6 a1.3 1.3 0 0 1 -1.3 1.3 H16.4 Z" fill="#fff"/></g></svg><b>编辑</b></span><span class="ob" style="left:2819px;width:91px;background:#22c2c4"><svg class="oi" style="left:12px;top:13px" width="19" height="19" viewBox="0 0 19 19"><path d="M7 0 H12 V7 H19 V12 H12 V19 H7 V12 H0 V7 H7 Z" fill="#fff"/></svg><b>新增</b></span><span class="ob" style="left:2918px;width:90px;background:#ea4f60"><svg class="oi" style="left:13px;top:14px" width="16" height="16" viewBox="0 0 16 16"><path d="M0 3 L3 0 L8 5 L13 0 L16 3 L11 8 L16 13 L13 16 L8 11 L3 16 L0 13 L5 8 Z" fill="#fff"/></svg><b>删除</b></span></div>
<div class="row" style="top:1450px"><i class="radio"></i><span class="td cj" style="left:152px">部门动态</span><span class="td num" style="left:464px">18</span><span class="td grey cj" style="left:840px">无缩略图</span><span class="td num" style="left:1216px">0</span><span class="badge" style="left:1591px">显示</span><span class="td num" style="left:1967px">admin</span><span class="td num" style="left:2343px">2024-09-15 16:05:22</span><span class="ob" style="left:2718px;width:94px;background:#1c7cc2"><svg class="oi" style="left:10px;top:12px" width="25" height="21" viewBox="595 286 25 21"><path d="M611.3 287 H599 a3 3 0 0 0 -3 3 V301 a3 3 0 0 0 3 3 H609.5 a3 3 0 0 0 3 -3 V298" fill="none" stroke="#fff" stroke-width="1.9"/><g transform="translate(603.4 301.6) rotate(-45)"><path d="M0 0 L3 -2.9 H15 V2.9 H3 Z" fill="#fff"/><rect x="3.4" y="-1.3" width="2.6" height="2.6" fill="#1c7cc2"/><path d="M16.4 -2.9 H18.4 a1.3 1.3 0 0 1 1.3 1.3 V1.6 a1.3 1.3 0 0 1 -1.3 1.3 H16.4 Z" fill="#fff"/></g></svg><b>编辑</b></span><span class="ob" style="left:2819px;width:91px;background:#22c2c4"><svg class="oi" style="left:12px;top:13px" width="19" height="19" viewBox="0 0 19 19"><path d="M7 0 H12 V7 H19 V12 H12 V19 H7 V12 H0 V7 H7 Z" fill="#fff"/></svg><b>新增</b></span><span class="ob" style="left:2918px;width:90px;background:#ea4f60"><svg class="oi" style="left:13px;top:14px" width="16" height="16" viewBox="0 0 16 16"><path d="M0 3 L3 0 L8 5 L13 0 L16 3 L11 8 L16 13 L13 16 L8 11 L3 16 L0 13 L5 8 Z" fill="#fff"/></svg><b>删除</b></span></div>
<div class="row" style="top:1528px"><i class="radio"></i><span class="td cj" style="left:152px">先进典型</span><span class="td num" style="left:464px">19</span><span class="td grey cj" style="left:840px">无缩略图</span><span class="td num" style="left:1216px">0</span><span class="badge" style="left:1591px">显示</span><span class="td num" style="left:1967px">admin</span><span class="td num" style="left:2343px">2024-09-15 16:06:13</span><span class="ob" style="left:2718px;width:94px;background:#1c7cc2"><svg class="oi" style="left:10px;top:12px" width="25" height="21" viewBox="595 286 25 21"><path d="M611.3 287 H599 a3 3 0 0 0 -3 3 V301 a3 3 0 0 0 3 3 H609.5 a3 3 0 0 0 3 -3 V298" fill="none" stroke="#fff" stroke-width="1.9"/><g transform="translate(603.4 301.6) rotate(-45)"><path d="M0 0 L3 -2.9 H15 V2.9 H3 Z" fill="#fff"/><rect x="3.4" y="-1.3" width="2.6" height="2.6" fill="#1c7cc2"/><path d="M16.4 -2.9 H18.4 a1.3 1.3 0 0 1 1.3 1.3 V1.6 a1.3 1.3 0 0 1 -1.3 1.3 H16.4 Z" fill="#fff"/></g></svg><b>编辑</b></span><span class="ob" style="left:2819px;width:91px;background:#22c2c4"><svg class="oi" style="left:12px;top:13px" width="19" height="19" viewBox="0 0 19 19"><path d="M7 0 H12 V7 H19 V12 H12 V19 H7 V12 H0 V7 H7 Z" fill="#fff"/></svg><b>新增</b></span><span class="ob" style="left:2918px;width:90px;background:#ea4f60"><svg class="oi" style="left:13px;top:14px" width="16" height="16" viewBox="0 0 16 16"><path d="M0 3 L3 0 L8 5 L13 0 L16 3 L11 8 L16 13 L13 16 L8 11 L3 16 L0 13 L5 8 Z" fill="#fff"/></svg><b>删除</b></span></div>
<div class="row" style="top:1606px"><i class="radio"></i><svg class="tchev" style="left:88px" width="24" height="16" viewBox="0 0 24 16"><path d="M0 4 L4 0 L12 8 L20 0 L24 4 L12 16 Z" fill="#5b5f63"/></svg><span class="td cj" style="left:121px">文化发展</span><span class="td num" style="left:464px">24</span><span class="td grey cj" style="left:840px">无缩略图</span><span class="td num" style="left:1216px">5</span><span class="badge" style="left:1591px">显示</span><span class="td num" style="left:1967px">admin</span><span class="td num" style="left:2343px">2024-09-15 16:10:31</span><span class="ob" style="left:2718px;width:94px;background:#1c7cc2"><svg class="oi" style="left:10px;top:12px" width="25" height="21" viewBox="595 286 25 21"><path d="M611.3 287 H599 a3 3 0 0 0 -3 3 V301 a3 3 0 0 0 3 3 H609.5 a3 3 0 0 0 3 -3 V298" fill="none" stroke="#fff" stroke-width="1.9"/><g transform="translate(603.4 301.6) rotate(-45)"><path d="M0 0 L3 -2.9 H15 V2.9 H3 Z" fill="#fff"/><rect x="3.4" y="-1.3" width="2.6" height="2.6" fill="#1c7cc2"/><path d="M16.4 -2.9 H18.4 a1.3 1.3 0 0 1 1.3 1.3 V1.6 a1.3 1.3 0 0 1 -1.3 1.3 H16.4 Z" fill="#fff"/></g></svg><b>编辑</b></span><span class="ob" style="left:2819px;width:91px;background:#22c2c4"><svg class="oi" style="left:12px;top:13px" width="19" height="19" viewBox="0 0 19 19"><path d="M7 0 H12 V7 H19 V12 H12 V19 H7 V12 H0 V7 H7 Z" fill="#fff"/></svg><b>新增</b></span><span class="ob" style="left:2918px;width:90px;background:#ea4f60"><svg class="oi" style="left:13px;top:14px" width="16" height="16" viewBox="0 0 16 16"><path d="M0 3 L3 0 L8 5 L13 0 L16 3 L11 8 L16 13 L13 16 L8 11 L3 16 L0 13 L5 8 Z" fill="#fff"/></svg><b>删除</b></span></div>

<div id="footer" class="abs"><span class="abs" style="left:2887px;top:19px;height:40px;line-height:40px;font-size:26px;color:#555a5e;white-space:nowrap;letter-spacing:0.15px">© 2024 RuoYi Copyright</span></div>
<div class="abs" style="left:3583px;top:82px;width:3px;height:1293px;background:#c4c4c4;border-radius:2px 0 0 2px"></div>

<script>
(function(){
  try{
    var d=document, bd=d.body;
    var a=d.createElement('span'); a.style.cssText='position:absolute;left:-99999px;top:0;font-size:100px;line-height:1;white-space:nowrap;font-family:"Liberation Sans",sans-serif';
    a.textContent='\u6587\u6587\u6587\u6587\u6587\u6587\u6587\u6587\u6587\u6587';
    var r=d.createElement('span'); r.style.cssText='position:absolute;left:-99999px;top:0;display:block;width:1000px;height:10px';
    bd.appendChild(a); bd.appendChild(r);
    var ratio=a.getBoundingClientRect().width/r.getBoundingClientRect().width;
    bd.removeChild(a); bd.removeChild(r);
    if(!(ratio>0) || ratio>0.92) return;
    var ls=(1-ratio).toFixed(3)+'em';
    var re=/[\u2E80-\u9FFF\uF900-\uFAFF\uFF00-\uFFEF\u3000-\u303F]+/g;
    var walker=d.createTreeWalker(bd, NodeFilter.SHOW_TEXT, null, false), nodes=[], n;
    while((n=walker.nextNode())){ if(re.test(n.nodeValue)) nodes.push(n); re.lastIndex=0; }
    nodes.forEach(function(node){
      var s=node.nodeValue, frag=d.createDocumentFragment(), last=0, m;
      re.lastIndex=0;
      while((m=re.exec(s))){
        if(m.index>last) frag.appendChild(d.createTextNode(s.slice(last,m.index)));
        var sp=d.createElement('span'); sp.style.letterSpacing=ls; sp.textContent=m[0]; frag.appendChild(sp);
        last=m.index+m[0].length;
      }
      if(last<s.length) frag.appendChild(d.createTextNode(s.slice(last)));
      node.parentNode.replaceChild(frag,node);
    });
  }catch(e){}
})();
</script>

</body>
</html>
